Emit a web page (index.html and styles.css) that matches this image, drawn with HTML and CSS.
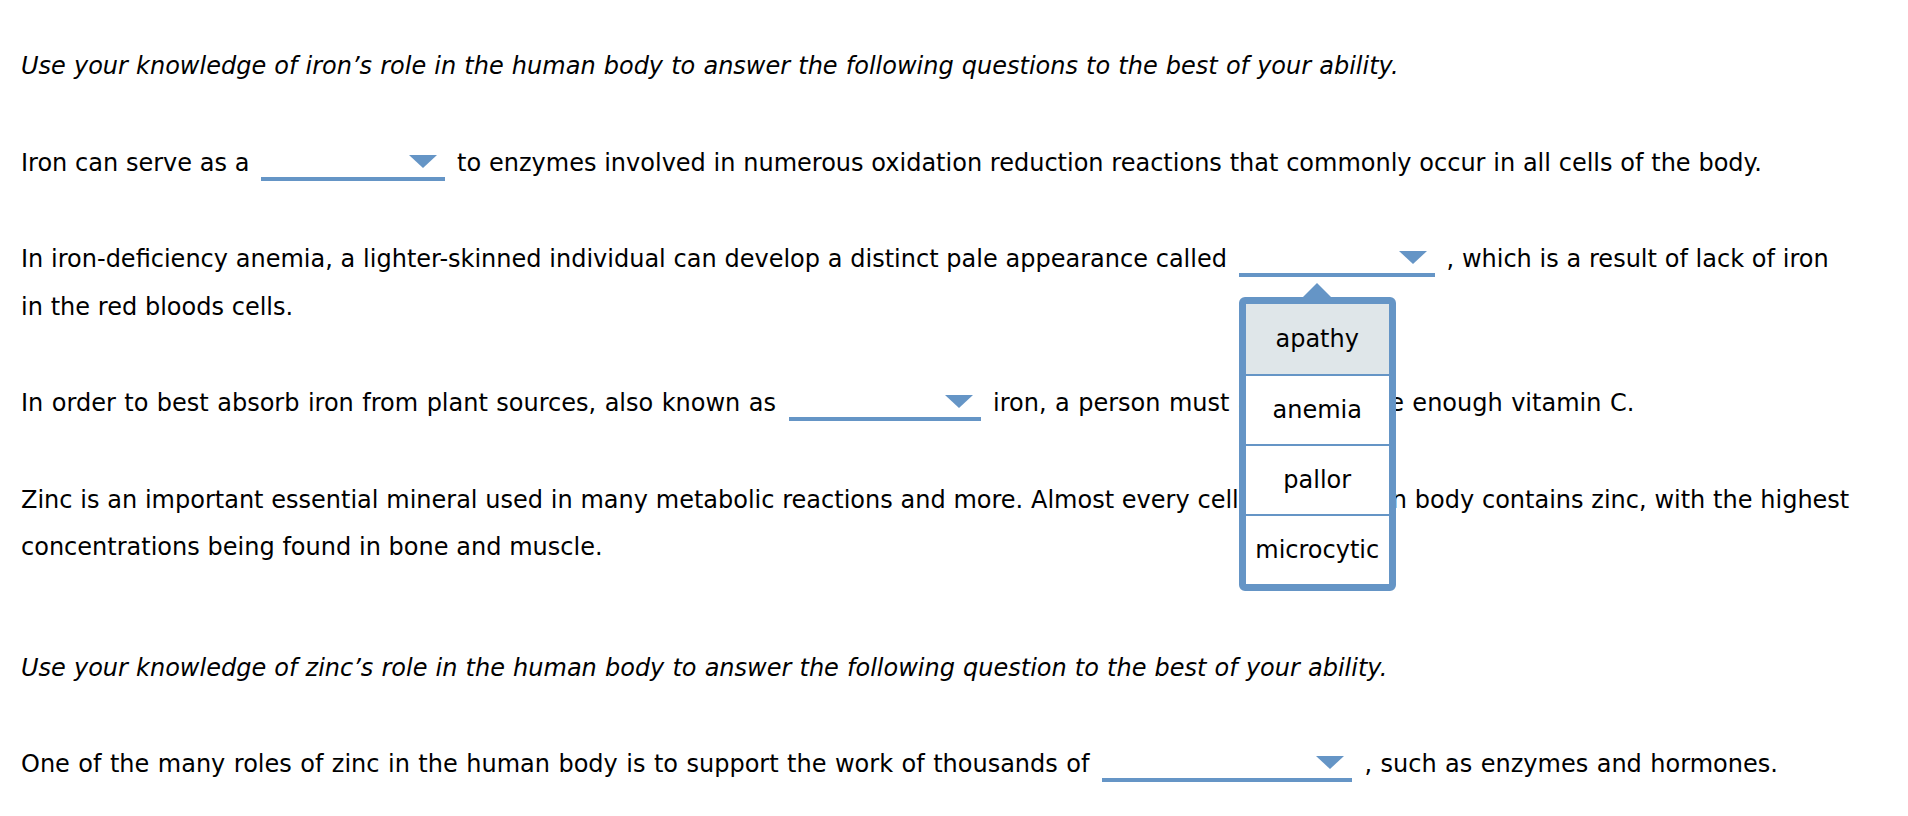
FILE: index.html
```html
<!DOCTYPE html>
<html lang="en">
  <head>
    <meta charset="UTF-8" />
    <title>Iron and Zinc Questions</title>
    <link rel="stylesheet" href="styles.css">
  </head>
  <body>
    <!-- Iron questions -->
    <div class="question">
      <p class="intro">Use your knowledge of iron’s role in the human body to answer the following questions to the best of your ability.</p>
      <p>
        Iron can serve as a
        <span class="blank w184"><svg class="caret" viewBox="0 0 28 13"><path d="M0 0H28L14 13Z" /></svg></span>
        to enzymes involved in numerous oxidation reduction reactions that commonly occur in all cells of the body.
      </p>
      <p>
        In iron-deficiency anemia, a lighter-skinned individual can develop a distinct pale appearance called
        <span class="blank w196 open"><svg class="caret" viewBox="0 0 28 13"><path d="M0 0H28L14 13Z" /></svg>
          <span class="menu">
            <span class="option active">apathy</span>
            <span class="option">anemia</span>
            <span class="option">pallor</span>
            <span class="option">microcytic</span>
          </span>
        </span>
        , which is a result of lack of iron in the red bloods cells.
      </p>
      <p class="loose">
        In order to best absorb iron from plant sources, also known as
        <span class="blank w192"><svg class="caret" viewBox="0 0 28 13"><path d="M0 0H28L14 13Z" /></svg></span>
        iron, a person must also consume enough vitamin C.
      </p>
      <p>
        Zinc is an important essential mineral used in many metabolic reactions and more. Almost every cell in the human body contains zinc, with the highest concentrations being found in bone and muscle.
      </p>
    </div>

    <!-- Zinc question -->
    <div class="question">
      <p class="intro">Use your knowledge of zinc’s role in the human body to answer the following question to the best of your ability.</p>
      <p class="loose">
        One of the many roles of zinc in the human body is to support the work of thousands of
        <span class="blank w250"><svg class="caret" viewBox="0 0 28 13"><path d="M0 0H28L14 13Z" /></svg></span>
        , such as enzymes and hormones.
      </p>
    </div>
  </body>
</html>
```

FILE: styles.css
```css
body {
  font-family: "DejaVu Sans", Verdana, sans-serif;
  font-size: 24px;
  line-height: 47.5px;
  word-spacing: 0.15px;
  color: #000;
  background-color: #fff;
  margin: 0;
  padding: 43px 56px 0 21px;
}

p {
  margin: 0;
}

.question p + p {
  margin-top: 49px;
}

.question + .question {
  margin-top: 73px;
}

.intro {
  font-style: italic;
  word-spacing: 0.5px;
}

.loose {
  word-spacing: 0.85px;
}

/* dropdown blank */
.blank {
  display: inline-block;
  position: relative;
  height: 30px;
  margin: 0 4px;
  border-bottom: 4px solid #6595c6;
  vertical-align: -10px;
  word-spacing: 0;
}

.blank.w184 { width: 184px; }
.blank.w192 { width: 192px; }
.blank.w196 { width: 196px; }
.blank.w250 { width: 250px; }

.caret {
  display: block;
  width: 28px;
  height: 13px;
  margin: 8px 8px 0 auto;
  fill: #6595c6;
}

.menu {
  position: absolute;
  top: calc(100% + 24px);
  left: 0;
  z-index: 1;
  display: flex;
  flex-direction: column;
  width: 143px;
  border: 7px solid #6595c6;
  border-radius: 6px;
  background-color: #fff;
}

.menu::before {
  content: "";
  position: absolute;
  top: -21px;
  left: 50%;
  margin-left: -14px;
  border-left: 14px solid transparent;
  border-right: 14px solid transparent;
  border-bottom: 14px solid #6595c6;
}

.option {
  height: 70px;
  line-height: 70px;
  text-align: center;
  color: #000;
}

.option + .option {
  border-top: 2px solid #6595c6;
  height: 68px;
  line-height: 68px;
}

.option.active {
  background-color: #dfe6e9;
}
```
